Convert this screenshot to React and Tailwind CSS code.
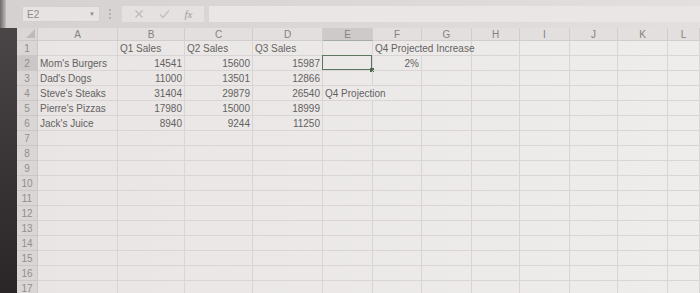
import React from "react";

const COLS = [
  { key: "A", w: "w-[80px]" },
  { key: "B", w: "w-[67px]" },
  { key: "C", w: "w-[68px]" },
  { key: "D", w: "w-[70px]" },
  { key: "E", w: "w-[50px]" },
  { key: "F", w: "w-[49px]" },
  { key: "G", w: "w-[50px]" },
  { key: "H", w: "w-[48px]" },
  { key: "I", w: "w-[50px]" },
  { key: "J", w: "w-[48px]" },
  { key: "K", w: "w-[50px]" },
  { key: "L", w: "flex-1" },
];

const DATA = {
  1: { B: ["Q1 Sales", "l"], C: ["Q2 Sales", "l"], D: ["Q3 Sales", "l"], F: ["Q4 Projected Increase", "l", 2] },
  2: { A: ["Mom's Burgers", "l"], B: ["14541", "r"], C: ["15600", "r"], D: ["15987", "r"], F: ["2%", "r"] },
  3: { A: ["Dad's Dogs", "l"], B: ["11000", "r"], C: ["13501", "r"], D: ["12866", "r"] },
  4: { A: ["Steve's Steaks", "l"], B: ["31404", "r"], C: ["29879", "r"], D: ["26540", "r"], E: ["Q4 Projection", "l", 2] },
  5: { A: ["Pierre's Pizzas", "l"], B: ["17980", "r"], C: ["15000", "r"], D: ["18999", "r"] },
  6: { A: ["Jack's Juice", "l"], B: ["8940", "r"], C: ["9244", "r"], D: ["11250", "r"] },
};

const SPAN_W = { F: "w-[99px]", E: "w-[99px]" };

function Row({ n }) {
  const data = DATA[n] || {};
  const cells = [];
  let skip = 0;
  COLS.forEach((c) => {
    if (skip > 0) {
      skip--;
      return;
    }
    const d = data[c.key];
    const span = d && d[2] ? d[2] : 1;
    if (span > 1) skip = span - 1;
    const w = span > 1 ? SPAN_W[c.key] : c.w;
    const selected = n === 2 && c.key === "E";
    cells.push(
      <div
        key={c.key}
        className={`${w} shrink-0 h-full border-r border-b border-[#d8d5d4] relative flex items-center px-[2px] whitespace-nowrap ${
          d && d[1] === "r" ? "justify-end" : "justify-start"
        }`}
      >
        {d ? <span>{d[0]}</span> : null}
        {selected ? (
          <>
            <div className="absolute -left-[1px] -top-[1px] right-0 bottom-0 border-[1.5px] border-[#5a7560]" />
            <div className="absolute -right-[2px] -bottom-[2px] w-[4px] h-[4px] bg-[#4d6a50]" />
          </>
        ) : null}
      </div>
    );
  });
  return (
    <div className="flex h-[15px] shrink-0">
      <div
        className={`w-[21px] shrink-0 h-full flex items-center justify-center border-r border-b border-[#cac7c6] ${
          n === 2 ? "bg-[#cac7c6]" : "bg-[#d9d6d5]"
        } text-[#918e8d]`}
      >
        {n}
      </div>
      {cells}
    </div>
  );
}

export default function App() {
  const rows = Array.from({ length: 17 }, (_, i) => i + 1);
  return (
    <div
      className="w-[700px] h-[293px] overflow-hidden bg-gradient-to-r from-[#e8e5e4] to-[#efedec] flex flex-col text-[10px] text-[#656261]"
      style={{ fontFamily: '"Liberation Sans", Arial, sans-serif' }}
    >
      {/* formula bar */}
      <div className="h-[28px] shrink-0 flex items-center bg-gradient-to-r from-[#d4d1d0] to-[#e2dfde]">
        <div className="w-[6px] h-full bg-gradient-to-r from-[#6e6a6a] to-[#c2bfbe] shrink-0" />
        <div className="ml-[16px] w-[78px] h-[16px] bg-[#e6e3e2] border border-[#d3d0cf] flex items-center justify-between px-[4px] text-[#8e8b8a]">
          <span>E2</span>
          <span className="text-[6px] text-[#8e8b8a]">▼</span>
        </div>
        <div className="ml-[9px] flex flex-col gap-[2px]">
          <div className="w-[2px] h-[2px] bg-[#b5b2b1]" />
          <div className="w-[2px] h-[2px] bg-[#b5b2b1]" />
          <div className="w-[2px] h-[2px] bg-[#b5b2b1]" />
        </div>
        <div className="ml-[11px] w-[82px] h-[16px] bg-[#e4e1e0] flex items-center justify-around px-[4px]">
          <svg width="10" height="10" viewBox="0 0 10 10" stroke="#bcb9b8" strokeWidth="1.2" fill="none">
            <path d="M1.5 1.5 L8.5 8.5 M8.5 1.5 L1.5 8.5" />
          </svg>
          <svg width="11" height="10" viewBox="0 0 11 10" stroke="#c2bfbe" strokeWidth="1.3" fill="none">
            <path d="M1 5.5 L4 8.5 L10 1.5" />
          </svg>
          <span
            className="italic text-[11px] text-[#a09d9c]"
            style={{ fontFamily: '"Liberation Serif", "Times New Roman", serif' }}
          >
            fx
          </span>
        </div>
        <div className="ml-[5px] flex-1 h-[16px] bg-[#e9e6e5]" />
      </div>

      {/* grid */}
      <div className="flex flex-1 min-h-0">
        <div className="w-[17px] shrink-0 bg-gradient-to-b from-[#4a4647] to-[#2a2627]" />
        <div className="flex-1 flex flex-col min-w-0">
          {/* column headers */}
          <div className="flex h-[13px] shrink-0 bg-[#e2dfde] text-[#858281]">
            <div className="w-[21px] shrink-0 h-full border-r border-b border-[#cac7c6] relative bg-[#dad7d6]">
              <div className="absolute right-[2px] bottom-[2px] w-0 h-0 border-l-[9px] border-l-transparent border-b-[9px] border-b-[#bebbba]" />
            </div>
            {COLS.map((c) => (
              <div
                key={c.key}
                className={`${c.w} shrink-0 h-full flex items-center justify-center border-r border-b border-[#d0cdcc] ${
                  c.key === "E" ? "bg-[#cdcac9] border-b-[#a5aca5]" : ""
                }`}
              >
                {c.key}
              </div>
            ))}
          </div>
          {rows.map((n) => (
            <Row key={n} n={n} />
          ))}
        </div>
      </div>
    </div>
  );
}
